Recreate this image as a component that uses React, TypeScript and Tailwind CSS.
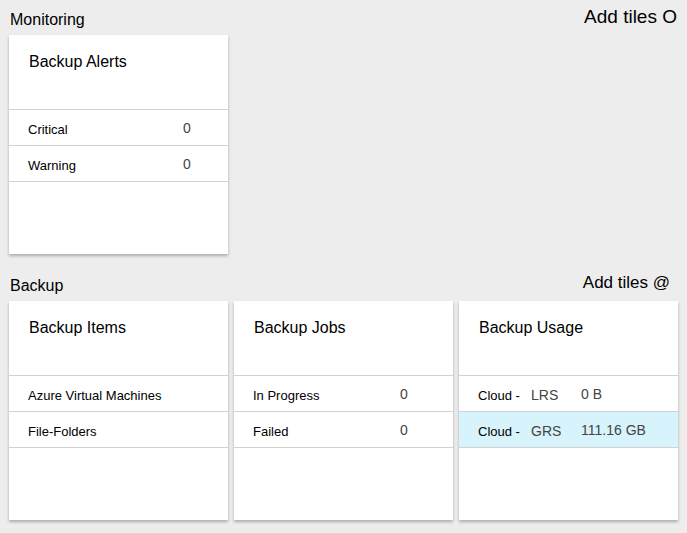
type Row = { label: string; tag?: string; value?: string; active?: boolean };

function Tile({ title, rows, labelW = "w-[155px]" }: { title: string; rows: Row[]; labelW?: string }) {
  return (
    <div className="w-[219px] h-[219px] bg-white shadow-[0_2px_3px_rgba(0,0,0,0.28)] flex flex-col">
      <div className="h-[75px] border-b border-[#d2d2d2] pl-5 pt-[17px] text-[16px] leading-5 text-black">{title}</div>
      {rows.map((r) => (
        <div
          key={r.label + (r.tag ?? "")}
          className={`h-[36px] border-b border-[#d2d2d2] flex items-center pl-[19px] text-[13px] pt-[4px] ${r.active ? "bg-[#d7f3fb]" : ""}`}
        >
          <span className={r.tag ? "w-[53px] text-black" : `${labelW} text-black`}>{r.label}</span>
          {r.tag && <span className="w-[50px] text-[14px] text-[#444]">{r.tag}</span>}
          {r.value && <span className="text-[14px] text-[#444] -mt-[2px]">{r.value}</span>}
        </div>
      ))}
    </div>
  );
}

export default function App() {
  return (
    <div className="w-[687px] h-[533px] bg-[#ededed] font-['Liberation_Sans',Arial,sans-serif] text-black">
      <div className="flex justify-between items-start h-[35px] pl-[10px] pr-[10px]">
        <div className="text-[16px] pt-[10px] leading-5">Monitoring</div>
        <div className="text-[19px] pt-[7px] leading-5">Add tiles O</div>
      </div>
      <div className="pl-[9px]">
        <Tile
          title="Backup Alerts"
          rows={[
            { label: "Critical", value: "0" },
            { label: "Warning", value: "0" },
          ]}
        />
      </div>
      <div className="flex justify-between items-start h-[47px] pl-[10px] pr-[17px] pt-[22px]">
        <div className="text-[16px] leading-5">Backup</div>
        <div className="text-[17px] leading-5 -mt-[3px]">Add tiles @</div>
      </div>
      <div className="flex gap-[6px] pl-[9px]">
        <Tile
          title="Backup Items"
          rows={[{ label: "Azure Virtual Machines" }, { label: "File-Folders" }]}
        />
        <Tile
          title="Backup Jobs"
          labelW="w-[147px]"
          rows={[
            { label: "In Progress", value: "0" },
            { label: "Failed", value: "0" },
          ]}
        />
        <Tile
          title="Backup Usage"
          rows={[
            { label: "Cloud -", tag: "LRS", value: "0 B" },
            { label: "Cloud -", tag: "GRS", value: "111.16 GB", active: true },
          ]}
        />
      </div>
    </div>
  );
}
